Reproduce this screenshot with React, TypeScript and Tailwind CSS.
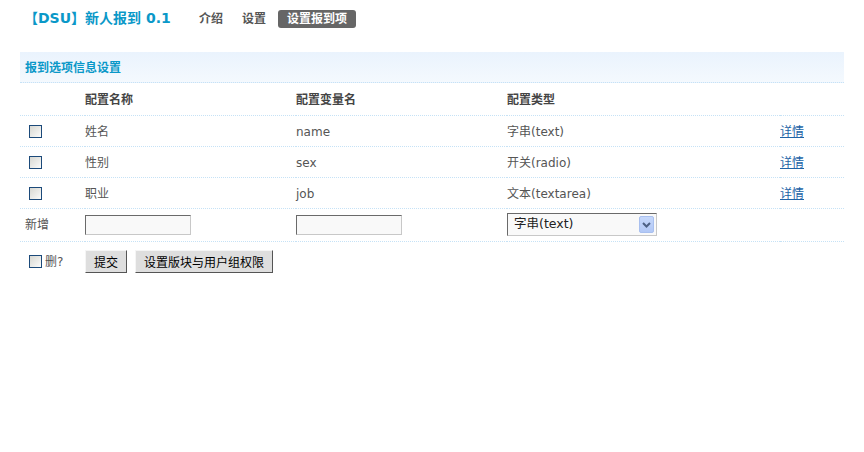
import React from "react";

const font = { fontFamily: '"DejaVu Sans", "Noto Sans CJK SC", sans-serif' };

function Box() {
  return (
    <span className="inline-block w-[13px] h-[13px] border border-[#1c4a7a] bg-gradient-to-br from-[#d8d8d2] to-[#fbfbfa] align-middle" />
  );
}

const rows = [
  { name: "姓名", key: "name", type: "字串(text)" },
  { name: "性别", key: "sex", type: "开关(radio)" },
  { name: "职业", key: "job", type: "文本(textarea)" },
];

export default function App() {
  return (
    <div className="w-[864px] h-[452px] bg-white text-[12px] text-[#555]" style={font}>
      <div className="flex items-center h-[36px] pl-[24px] pt-[1px]">
        <span className="text-[14px] font-bold text-[#0a98c8] w-[175px]">【DSU】新人报到 0.1</span>
        <span className="font-bold text-[#555]">介绍</span>
        <span className="font-bold text-[#555] ml-[19px]">设置</span>
        <span className="font-bold text-white bg-[#666] rounded-[3px] ml-[12px] px-[9px] h-[18px] flex items-center">设置报到项</span>
      </div>
      <div className="ml-[20px] w-[824px] mt-[16px]">
        <div className="h-[31px] bg-gradient-to-b from-[#eaf3fd] to-[#f4f9fe] border-b border-dotted border-[#c6e2f6] flex items-center pl-[5px] pt-[2px]">
          <span className="font-bold text-[#0a98c8]">报到选项信息设置</span>
        </div>
        <table className="w-full border-collapse">
          <colgroup>
            <col className="w-[65px]" />
            <col className="w-[211px]" />
            <col className="w-[211px]" />
            <col className="w-[273px]" />
            <col />
          </colgroup>
          <tbody>
            <tr className="h-[32px] border-b border-dotted border-[#c6e2f6] font-bold text-[#444]">
              <td></td>
              <td className="pt-[3px]">配置名称</td>
              <td className="pt-[3px]">配置变量名</td>
              <td className="pt-[3px]">配置类型</td>
              <td></td>
            </tr>
            {rows.map((r) => (
              <tr key={r.key} className="h-[31px] border-b border-dotted border-[#c6e2f6]">
                <td className="pl-[9px]"><Box /></td>
                <td className="pt-[2px]">{r.name}</td>
                <td className="pt-[2px]">{r.key}</td>
                <td className="pt-[2px]">{r.type}</td>
                <td className="pt-[2px]"><a className="text-[#2163a6] underline">详情</a></td>
              </tr>
            ))}
            <tr className="h-[33px] border-b border-dotted border-[#c6e2f6]">
              <td className="pl-[5px] pt-[1px]">新增</td>
              <td>
                <span className="block w-[106px] h-[20px] bg-[#f9f9f9] border border-[#c8c8c8] border-t-[#6a6a6a] border-l-[#6a6a6a]" />
              </td>
              <td>
                <span className="block w-[106px] h-[20px] bg-[#f9f9f9] border border-[#c8c8c8] border-t-[#6a6a6a] border-l-[#6a6a6a]" />
              </td>
              <td>
                <span className="flex items-center w-[150px] h-[23px] bg-[#f9f9f9] border border-[#c8c8c8] border-t-[#6a6a6a] border-l-[#6a6a6a] text-[12.5px] text-[#222] pl-[6px]">
                  <span className="flex-1 font-normal">字串(text)</span>
                  <span className="w-[15px] h-[17px] mr-[2px] rounded-[2px] bg-gradient-to-b from-[#c6d8fb] to-[#b2c8f6] border border-[#a9c0ef] flex items-center justify-center">
                    <svg width="9" height="6" viewBox="0 0 9 6">
                      <path d="M1 1 L4.5 4.5 L8 1" stroke="#4d6185" strokeWidth="2" fill="none" />
                    </svg>
                  </span>
                </span>
              </td>
              <td></td>
            </tr>
          </tbody>
        </table>
        <div className="flex items-center h-[39px] pt-[1px]">
          <span className="pl-[9px] flex items-center w-[65px]">
            <Box />
            <span className="ml-[3px] text-[#555]">删?</span>
          </span>
          <button className="h-[23px] px-[8px] bg-[#dedede] border border-[#f5f5f5] border-b-[#555] border-r-[#555] text-[12px] text-black" style={{ fontFamily: '"Noto Sans CJK SC", sans-serif' }}>提交</button>
          <button className="ml-[8px] h-[23px] px-[8px] bg-[#dedede] border border-[#f5f5f5] border-b-[#555] border-r-[#555] text-[12px] text-black" style={{ fontFamily: '"Noto Sans CJK SC", sans-serif' }}>设置版块与用户组权限</button>
        </div>
      </div>
    </div>
  );
}
